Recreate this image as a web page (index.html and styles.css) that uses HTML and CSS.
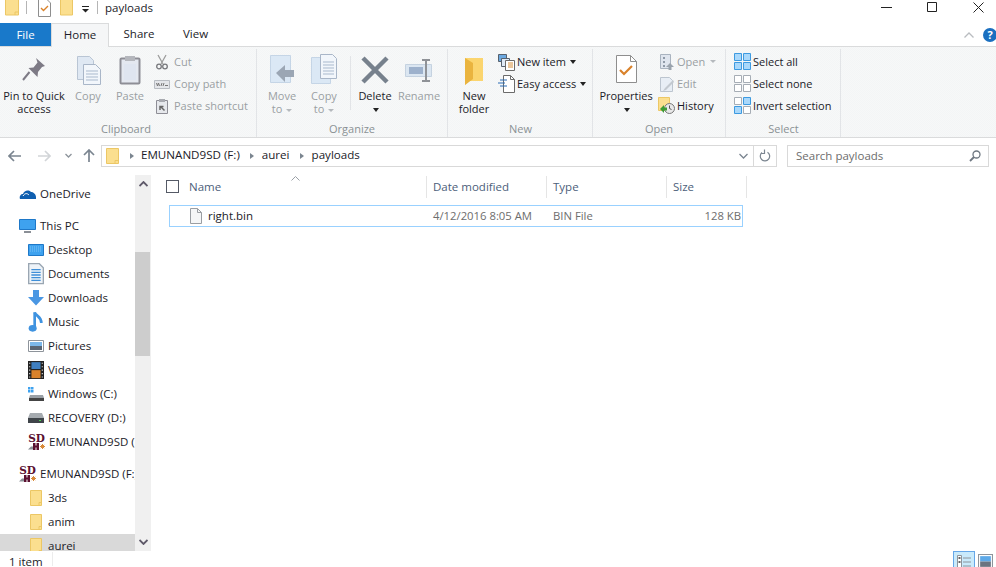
FILE: index.html
```html
<!DOCTYPE html>
<html lang="en">
<head>
<meta charset="utf-8">
<title>payloads</title>
<link rel="stylesheet" href="styles.css">
</head>
<body>
<div class="window">
  <header class="titlebar">
    <div class="qat">
      <svg class="qi folder-q" viewBox="0 0 14 16"><path d="M.5-1h13v16H.5z" fill="#fbdf8f" stroke="#ecc765"/><path d="M10 15v-3h3.500" fill="none" stroke="#ecc765"/></svg>
      <span class="qsep"></span>
      <svg class="qi doc-q" viewBox="0 0 13 17"><path d="M.5-1h8l4 4v13.500h-12z" fill="#fff" stroke="#8e8e8e"/><path d="M3 8l2.500 2.500L10 6" fill="none" stroke="#d9822b" stroke-width="1.400"/></svg>
      <svg class="qi folder-q2" viewBox="0 0 13 16"><path d="M.5-1h12v16H.5z" fill="#fbdf8f" stroke="#ecc765"/></svg>
      <svg class="qi drop-q" viewBox="0 0 7 7"><path d="M0 .5h7" stroke="#222"/><path d="M0 3h7L3.500 6.500z" fill="#222"/></svg>
      <span class="qsep qsep2"></span>
      <span class="title">payloads</span>
    </div>
    <div class="winctl">
      <svg class="wc" viewBox="0 0 11 11"><path d="M0 5.500h11" stroke="#222"/></svg>
      <svg class="wc" viewBox="0 0 11 11"><path d="M.5.500h9v9h-9z" fill="none" stroke="#222"/></svg>
      <svg class="wc" viewBox="0 0 11 11"><path d="M.5.500l10 10M10.500.500l-10 10" stroke="#222" fill="none"/></svg>
    </div>
  </header>

  <nav class="tabs">
    <span class="tab tab-file">File</span>
    <span class="tab tab-home">Home</span>
    <span class="tab tab-share">Share</span>
    <span class="tab tab-view">View</span>
    <span class="tabs-right">
      <svg class="collapse" viewBox="0 0 10 6"><path d="M.5 5.500L5 1l4.500 4.500" fill="none" stroke="#b9bcc0" stroke-width="1.300"/></svg>
      <span class="help">?</span>
    </span>
  </nav>

  <section class="ribbon">
    <div class="group g-clip">
      <div class="body">
        <div class="large w66">
          <svg class="ic32" viewBox="0 0 32 32"><path d="M18 4l9 8-3 1-4 5-.500 5-9-9 5-.500 4-5z" fill="#7d7a85"/><path d="M11.500 18L5 26" stroke="#7d7a85" stroke-width="2"/></svg>
          <span class="ltext">Pin to Quick<br>access</span>
        </div>
        <div class="large w42 off">
          <svg class="ic32" viewBox="0 0 32 32"><path d="M5.500 2.500h12l4 4v19h-16z" fill="#dfe8f3" stroke="#b9c5d4"/><path d="M11.500 10.500h12l5 5v15h-17z" fill="#f2f6fb" stroke="#a9b6c8"/><path d="M14 17h12M14 20h12M14 23h12M14 26h12" stroke="#a9b9cd"/></svg>
          <span class="ltext">Copy</span>
        </div>
        <div class="large w42 off">
          <svg class="ic32" viewBox="0 0 32 32"><rect x="6.500" y="4.500" width="19" height="25" rx="1" fill="#e4e8f0" stroke="#8e8e96" stroke-width="2"/><rect x="11" y="2" width="10" height="5" fill="#b4b6bc"/><path d="M10 10h12v16H10z" fill="#dfe5f0"/></svg>
          <span class="ltext">Paste</span>
        </div>
        <div class="small-col sc-clip">
          <div class="small off"><svg class="ic16" viewBox="0 0 16 16"><path d="M4 1l5 9M12 1l-5 9" stroke="#9d9d9d" stroke-width="1.300"/><circle cx="5" cy="12.500" r="2.300" fill="none" stroke="#77787c" stroke-width="1.300"/><circle cx="11" cy="12.500" r="2.300" fill="none" stroke="#77787c" stroke-width="1.300"/></svg>Cut</div>
          <div class="small off"><svg class="ic16" viewBox="0 0 16 16"><path d="M.5 4.500h15v8H.5z" fill="#e4e6ea" stroke="#b8bcc2"/><path d="M2.500 7l1 3 1-3 1 3M8 7l-1 3M10 7l-1 3M11 9.500h3" fill="none" stroke="#777"/></svg>Copy path</div>
          <div class="small off"><svg class="ic16" viewBox="0 0 16 16"><path d="M2.500 2.500h11v13h-11z" fill="#e6e8ec" stroke="#8e8e96"/><rect x="5" y="1" width="6" height="3" fill="#a8aab0"/><path d="M6 12V8.500h3.500M6.500 8.500l4 4" stroke="#666" fill="none" stroke-width="1.500"/></svg>Paste shortcut</div>
        </div>
      </div>
      <div class="glabel">Clipboard</div>
    </div>

    <div class="group g-org">
      <div class="body">
        <div class="large w42 off">
          <svg class="ic32" viewBox="0 0 32 32"><path d="M4.500 1.500h20v27h-20z" fill="#dbe8f5" stroke="#c5d5e6"/><path d="M10 19l9-8v5h9v7h-9v5z" fill="#9ba6b4"/></svg>
          <span class="ltext">Move<br>to <i class="caret-off"></i></span>
        </div>
        <div class="large w42 off">
          <svg class="ic32" viewBox="0 0 32 32"><path d="M3.500 3.500h19v26h-19z" fill="#dbe8f5" stroke="#c5d5e6"/><path d="M12.500 .5h12l4 4v20h-16z" fill="#f2f6fb" stroke="#a9b6c8"/><path d="M15 8h11M15 11h11M15 14h11M15 17h11M15 20h11" stroke="#a9b9cd"/></svg>
          <span class="ltext">Copy<br>to <i class="caret-off"></i></span>
        </div>
        <span class="vsep"></span>
        <div class="large w42">
          <svg class="ic32" viewBox="0 0 32 32"><path d="M4 4l24 24M28 4L4 28" stroke="#77818d" stroke-width="4.500"/></svg>
          <span class="ltext">Delete<br><i class="caret"></i></span>
        </div>
        <div class="large w42 m2 off">
          <svg class="ic32" viewBox="0 0 32 32"><path d="M2.500 10.500h26v12h-26z" fill="#dbe6f1" stroke="#c5d2e0"/><path d="M6 13h14v7H6z" fill="#9db1cc"/><path d="M19 6h8M23 6v21M19 27h8" stroke="#8f9297" stroke-width="2" fill="none"/></svg>
          <span class="ltext">Rename</span>
        </div>
      </div>
      <div class="glabel">Organize</div>
    </div>

    <div class="group g-new">
      <div class="body">
        <div class="large w50">
          <svg class="ic32" viewBox="0 0 32 32"><path d="M7 4h18v23H11l-4 4z" fill="#fbd56f"/><path d="M7 4l8 5v16l-8 6z" fill="#eab43f"/></svg>
          <span class="ltext">New<br>folder</span>
        </div>
        <div class="small-col sc-new">
          <div class="small"><svg class="ic18" viewBox="0 0 18 18"><path d="M.5 1.500h8v7h-8z" fill="#6ba8e0" stroke="#56616e"/><path d="M3.500 5.500h8v8h-8z" fill="#dfeaf6" stroke="#56616e"/><path d="M7.500 7.500h9v10h-9z" fill="#fff" stroke="#6b6b6b"/><path d="M10 10h5M10 12h5M10 14h5" stroke="#d68f3a"/></svg>New item <i class="caret"></i></div>
          <div class="small"><svg class="ic18" viewBox="0 0 18 18"><path d="M5.500 .5h7l4 4v13h-11z" fill="#fff" stroke="#6b6b6b"/><path d="M12.500.5v4h4" fill="none" stroke="#6b6b6b"/><path d="M2 5h7M0 8h7M2 11h7" stroke="#2a6cb5"/></svg>Easy access <i class="caret"></i></div>
        </div>
      </div>
      <div class="glabel">New</div>
    </div>

    <div class="group g-open">
      <div class="body">
        <div class="large w62">
          <svg class="ic32" viewBox="0 0 32 32"><path d="M6.500 1.500h14l6 6v21h-20z" fill="#fff" stroke="#8e8e8e"/><path d="M20.500 1.500v6h6" fill="none" stroke="#8e8e8e"/><path d="M10 16l4 4 8-8" fill="none" stroke="#d9822b" stroke-width="2.200"/></svg>
          <span class="ltext">Properties<br><i class="caret"></i></span>
        </div>
        <div class="small-col sc-open">
          <div class="small off"><svg class="ic16" viewBox="0 0 16 16"><path d="M1.500 .5h10v14h-10z" fill="#dfe5ee" stroke="#a9b3bf"/><path d="M4 3h2v2H4zM4 7h2v2H4zM4 11h2v2H4z" fill="#8f9aa8"/><path d="M11 9l4 4h-2.500v3h-3v-3H7z" fill="#9aa3ad"/></svg>Open <i class="caret-off"></i></div>
          <div class="small off"><svg class="ic16" viewBox="0 0 16 16"><path d="M1.500 1.500h9l3 3v11h-12z" fill="#e8eef5" stroke="#bcc5cf"/><path d="M14 4L6 12l-2 3 3-1 8-8z" fill="#c3c9d0"/></svg>Edit</div>
          <div class="small"><svg class="ic-h" viewBox="0 0 17 17"><path d="M.5.500h11v13H.5z" fill="#fbdf8f" stroke="#ecc765"/><circle cx="11.500" cy="11.500" r="5" fill="#e8e8e8" stroke="#777"/><path d="M11.500 8.500v3l2 1" stroke="#555" fill="none"/><path d="M2 12l4-4v2.500h3v3H6V16z" fill="#3d9c35"/></svg>History</div>
        </div>
      </div>
      <div class="glabel">Open</div>
    </div>

    <div class="group g-sel">
      <div class="body">
        <div class="small-col sc-sel">
          <div class="small"><svg class="ic17" viewBox="0 0 17 17"><path d="M.5.500h7v7h-7zM9.500.500h7v7h-7zM.5 9.500h7v7h-7zM9.500 9.500h7v7h-7z" fill="#a9d8fb" stroke="#3d9ae0"/></svg>Select all</div>
          <div class="small"><svg class="ic17" viewBox="0 0 17 17"><path d="M.5.500h7v7h-7zM9.500.500h7v7h-7zM.5 9.500h7v7h-7zM9.500 9.500h7v7h-7z" fill="#fff" stroke="#a6adb5"/></svg>Select none</div>
          <div class="small"><svg class="ic17" viewBox="0 0 17 17"><path d="M.5.500h7v7h-7zM9.500 9.500h7v7h-7z" fill="#fff" stroke="#a6adb5"/><path d="M9.500.500h7v7h-7zM.5 9.500h7v7h-7z" fill="#a9d8fb" stroke="#3d9ae0"/></svg>Invert selection</div>
        </div>
      </div>
      <div class="glabel">Select</div>
    </div>
  </section>

  <div class="addrrow">
    <div class="navbtns">
      <svg class="nb" viewBox="0 0 13 12"><path d="M6 1L1 6l5 5M1 6h12" fill="none" stroke="#7b8590" stroke-width="1.700"/></svg>
      <svg class="nb nb-fwd" viewBox="0 0 13 12"><path d="M7 1l5 5-5 5M12 6H0" fill="none" stroke="#d2d5d8" stroke-width="1.700"/></svg>
      <svg class="nb-down" viewBox="0 0 7 5"><path d="M.5 1l3 3 3-3" fill="none" stroke="#8d949b" stroke-width="1.300"/></svg>
      <svg class="nb nb-up" viewBox="0 0 12 13"><path d="M1 6l5-5 5 5M6 1v12" fill="none" stroke="#7b8590" stroke-width="1.700"/></svg>
    </div>
    <div class="addr">
      <svg class="addr-folder" viewBox="0 0 13 16"><path d="M.5.500h12v15H.5z" fill="#fbdf8f" stroke="#ecc765"/><path d="M9 15.500v-3h3.500" fill="none" stroke="#ecc765"/></svg>
      <span class="crumb-arrow first"></span><span class="crumb">EMUNAND9SD (F:)</span>
      <span class="crumb-arrow"></span><span class="crumb">aurei</span>
      <span class="crumb-arrow"></span><span class="crumb">payloads</span>
      <svg class="addr-down" viewBox="0 0 9 6"><path d="M.5 1l4 4 4-4" fill="none" stroke="#7b8590" stroke-width="1.300"/></svg>
      <span class="addr-sep"></span>
      <svg class="addr-ref" viewBox="0 0 12 13"><path d="M3 3.500a4.700 4.700 0 1 0 5.500-.3M5.500 .5v4H2" fill="none" stroke="#7b8590" stroke-width="1.200"/></svg>
    </div>
    <div class="search">
      <span>Search payloads</span>
      <svg class="mag" viewBox="0 0 12 12"><circle cx="7.500" cy="4.500" r="3.500" fill="none" stroke="#6e7781" stroke-width="1.300"/><path d="M5 7l-4 4" stroke="#6e7781" stroke-width="1.800"/></svg>
    </div>
  </div>

  <main class="main">
    <aside class="nav">
      <div class="nrow l1"><svg class="ni17" viewBox="0 0 17 12"><path d="M1 11c-1-3 1-5 3-5 1-3 5-5 8-2 2 0 5 2 5 5v2z" fill="#0f5fb0"/><path d="M4 8c2-3 4-3 6-1" stroke="#fff" fill="none"/></svg>OneDrive</div>
      <div class="nrow l1 gap"><svg class="ni17" viewBox="0 0 17 14"><path d="M.5.500h16v10H.5z" fill="#3ea2ef" stroke="#1e78c8"/><path d="M5 13h7" stroke="#8a8f96" stroke-width="2"/></svg>This PC</div>
      <div class="nrow l2"><svg class="ni16" viewBox="0 0 16 12"><path d="M.5.500h15v11H.5z" fill="#3ea2ef" stroke="#1e78c8"/><path d="M2 3h12M2 5h12M2 7h12" stroke="#7cc3f5" stroke-dasharray="1 1"/></svg>Desktop</div>
      <div class="nrow l2"><svg class="ni16" viewBox="0 0 12 16"><path d="M.5.500h8l3 3v12H.5z" fill="#eef3f8" stroke="#9aa6b2"/><path d="M2.500 5h7M2.500 7h7M2.500 9h7M2.500 11h7M2.500 13h7" stroke="#3f8fd8"/></svg>Documents</div>
      <div class="nrow l2"><svg class="ni16" viewBox="0 0 16 16"><path d="M5 0h6v7h5l-8 8.500L0 7h5z" fill="#4a97e3"/></svg>Downloads</div>
      <div class="nrow l2"><svg class="ni16" viewBox="0 0 12 16"><path d="M5 1v11" stroke="#3f93e0" stroke-width="2"/><ellipse cx="3.500" cy="13" rx="3" ry="2.500" fill="#3f93e0"/><path d="M5 1c1 3 5 3 5 8" stroke="#3f93e0" stroke-width="2" fill="none"/></svg>Music</div>
      <div class="nrow l2"><svg class="ni16" viewBox="0 0 16 12"><path d="M.5.500h15v11H.5z" fill="#fff" stroke="#8e949b"/><path d="M2 2h12v4H2z" fill="#7cb8ea"/><path d="M2 6h12v4H2z" fill="#5a6674"/></svg>Pictures</div>
      <div class="nrow l2"><svg class="ni16" viewBox="0 0 14 16"><path d="M0 0h14v16H0z" fill="#222"/><path d="M3 1h8v6H3z" fill="#3f7fc0"/><path d="M3 8h8v7H3z" fill="#d9822b"/><path d="M1 2h1M1 5h1M1 8h1M1 11h1M1 14h1M12 2h1M12 5h1M12 8h1M12 11h1M12 14h1" stroke="#ddd"/></svg>Videos</div>
      <div class="nrow l2"><svg class="ni16" viewBox="0 0 16 14"><path d="M0 0h2.500v2.500H0zM3 0h2.500v2.500H3zM0 3h2.500v2.500H0zM3 3h2.500v2.500H3z" fill="#3ea2ef"/><path d="M2 8h13l1 3v3H1v-3z" fill="#9aa0a6"/><path d="M1 11h15v3H1z" fill="#444"/></svg>Windows (C:)</div>
      <div class="nrow l2"><svg class="ni16" viewBox="0 0 16 10"><path d="M2 0h12l2 5v5H0V5z" fill="#a6abb0"/><path d="M0 5h16v5H0z" fill="#3f4449"/><path d="M11 7h2v1h-2z" fill="#4fd04f"/></svg>RECOVERY (D:)</div>
      <div class="nrow l2"><span class="sd"><b>SD</b><svg class="sdb" viewBox="0 0 17 7"><path d="M0 6.500l3-3h3v3z" fill="#8a8f96"/><path d="M5 0h2.500v2.500h1V0H11v7H8.500V4.500h-1V7H5z" fill="#5a1030"/><path d="M14.500 1v5M12 3.500h5M12.800 1.800l3.400 3.400M16.200 1.800l-3.400 3.400" stroke="#d98a3a"/></svg></span>EMUNAND9SD (F:)</div>
      <div class="nrow l1 gap"><span class="sd"><b>SD</b><svg class="sdb" viewBox="0 0 17 7"><path d="M0 6.500l3-3h3v3z" fill="#8a8f96"/><path d="M5 0h2.500v2.500h1V0H11v7H8.500V4.500h-1V7H5z" fill="#5a1030"/><path d="M14.500 1v5M12 3.500h5M12.800 1.800l3.400 3.400M16.200 1.800l-3.400 3.400" stroke="#d98a3a"/></svg></span>EMUNAND9SD (F:)</div>
      <div class="nrow l2"><svg class="ni-f" viewBox="0 0 12 16"><path d="M.5.500h11v15H.5z" fill="#fbdf8f" stroke="#ecc765"/><path d="M9 15.500v-3h2.500" fill="none" stroke="#ecc765"/></svg>3ds</div>
      <div class="nrow l2"><svg class="ni-f" viewBox="0 0 12 16"><path d="M.5.500h11v15H.5z" fill="#fbdf8f" stroke="#ecc765"/><path d="M9 15.500v-3h2.500" fill="none" stroke="#ecc765"/></svg>anim</div>
      <div class="nrow l2 sel"><svg class="ni-f" viewBox="0 0 12 16"><path d="M.5.500h11v15H.5z" fill="#fbdf8f" stroke="#ecc765"/><path d="M9 15.500v-3h2.500" fill="none" stroke="#ecc765"/></svg>aurei</div>
    </aside>
    <div class="scroll">
      <svg class="sarrow" viewBox="0 0 9 6"><path d="M.5 5L4.500 1l4 4" fill="none" stroke="#5f5a6a" stroke-width="1.800"/></svg>
      <div class="track"><div class="thumb"></div></div>
      <svg class="sarrow" viewBox="0 0 9 6"><path d="M.5 1l4 4 4-4" fill="none" stroke="#5f5a6a" stroke-width="1.800"/></svg>
    </div>
    <div class="content">
      <div class="lhead">
        <span class="check"></span>
        <span class="hcell hname">Name</span>
        <span class="hcell hdate">Date modified</span>
        <span class="hcell htype">Type</span>
        <span class="hcell hsize">Size</span>
        <svg class="sort" viewBox="0 0 9 5"><path d="M.5 4.500l4-4 4 4" fill="none" stroke="#9aa0a6"/></svg>
      </div>
      <div class="frow">
        <svg class="fileic" viewBox="0 0 12 16"><path d="M.5.500h7l4 4v11H.5z" fill="#f5f6f7" stroke="#9a9ea3"/><path d="M7.500.500v4h4" fill="none" stroke="#9a9ea3"/></svg>
        <span class="fname">right.bin</span>
        <span class="fdate">4/12/2016 8:05 AM</span>
        <span class="ftype">BIN File</span>
        <span class="fsize">128 KB</span>
      </div>
    </div>
  </main>

  <footer class="status">
    <span class="count">1 item</span>
    <span class="status-sep"></span>
    <span class="views">
      <span class="vbtn on"><svg viewBox="0 0 16 14"><path d="M1.500 .5h4v13h-4z" fill="#fff" stroke="#8e949b"/><path d="M7 3h8M7 7h8M7 11h8" stroke="#8e949b"/><path d="M2.500 2h2v2h-2zM2.500 6h2v2h-2z" fill="#666"/></svg></span>
      <span class="vbtn"><svg viewBox="0 0 14 14"><path d="M.5 .5h13v13H.5z" fill="#fff" stroke="#8e949b"/><path d="M2 2h10v5H2z" fill="#5da9e8"/><path d="M2 7h10v5H2z" fill="#6b7480"/></svg></span>
    </span>
  </footer>
</div>
</body>
</html>
```

FILE: styles.css
```css
* { box-sizing: border-box; }
html, body { margin: 0; padding: 0; }
body { width: 996px; height: 567px; overflow: hidden; background: #fff; font-family: "Open Sans", "Noto Sans", sans-serif; font-size: 11.5px; color: #1b1b28; }
svg { display: block; flex: none; }
i { font-style: normal; }
.window { display: flex; flex-direction: column; height: 567px; }

/* title bar */
.titlebar { height: 23px; display: flex; justify-content: space-between; overflow: hidden; }
.qat { display: flex; align-items: flex-start; }
.qi { height: 16px; }
.folder-q { width: 14px; margin-left: 5px; }
.qsep { width: 1px; height: 13px; margin: 1px 0 0 7px; background: #b5b5b5; }
.doc-q { width: 13px; height: 17px; margin-left: 11px; }
.folder-q2 { width: 13px; margin-left: 9px; }
.drop-q { width: 7px; height: 7px; margin: 6px 0 0 9px; }
.qsep2 { margin-left: 8px; }
.title { margin-left: 7px; font-size: 11.5px; line-height: 16px; }
.winctl { display: flex; padding-right: 12px; }
.wc { width: 11px; height: 11px; margin: 2px 0 0 35px; }

/* tabs */
.tabs { height: 24px; display: flex; position: relative; z-index: 1; align-items: stretch; }
.tab { display: flex; align-items: center; justify-content: center; height: 24px; padding-bottom: 2px; }
.tab-file { width: 51px; height: 23px; padding-bottom: 0; background: #1979ca; color: #fff; }
.tab-home { width: 58px; background: #f5f6f7; border: 1px solid #dadbdc; border-bottom: 0; }
.tab-share { width: 60px; }
.tab-view { width: 53px; }
.tabs-right { margin-left: auto; display: flex; align-items: center; gap: 9px; margin-right: -1px; }
.collapse { width: 10px; height: 6px; }
.help { width: 14px; height: 14px; border-radius: 50%; background: #1a6fc0; color: #fff; font-size: 11px; font-weight: 700; display: flex; align-items: center; justify-content: center; }

/* ribbon */
.ribbon { height: 92px; margin-top: -1px; font-size: 11px; background-color: #f5f6f7; background-image: repeating-conic-gradient(#f3f5f6 0 25%, #f7f8f8 0 50%); background-size: 2px 2px; border-top: 1px solid #dadbdc; border-bottom: 1px solid #dadbdc; display: flex; }
.group { display: flex; flex-direction: column; height: 88px; margin-top: 2px; padding-top: 2px; border-right: 1px solid #e2e4e7; }
.g-clip { width: 257px; padding-left: 1px; }
.g-org { width: 191px; padding-left: 4px; }
.g-new { width: 145px; padding-left: 1px; }
.g-open { width: 133px; padding-left: 2px; }
.g-sel { width: 115px; padding-left: 7px; }
.g-clip .glabel { padding-right: 5px; }
.g-org .glabel { padding-right: 4px; }
.g-open .glabel { padding-right: 2px; }
.g-sel .glabel { padding-right: 6px; }
.body { flex: 1; display: flex; }
.glabel { height: 16px; text-align: center; line-height: 15px; color: #8a9194; }
.large { display: flex; flex-direction: column; align-items: center; padding-top: 3px; }
.w66 { width: 66px; }
.w42 { width: 42px; }
.w50 { width: 50px; }
.w62 { width: 62px; }
.m2 { margin-left: 2px; }
.ic32 { width: 32px; height: 32px; }
.ltext { margin-top: 3px; line-height: 13px; text-align: center; white-space: nowrap; }
.off { color: #9a9fa3; }
.vsep { width: 1px; height: 54px; margin: 5px 3px 0 5px; background: #e2e4e7; }
.small-col { display: flex; flex-direction: column; }
.sc-clip { margin-left: 3px; }
.sc-new { margin-left: -1px; }
.sc-open { margin-left: 2px; }
.sc-sel { margin-left: 1px; }
.small { height: 22px; display: flex; align-items: center; white-space: nowrap; gap: 4px; }
.sc-new .small { gap: 1px; }
.sc-open .small, .sc-sel .small { gap: 2px; }
.sc-new .caret, .sc-open .caret-off { margin-left: 3px; }
.ic16 { width: 16px; height: 16px; }
.ic17 { width: 17px; height: 17px; }
.ic18 { width: 18px; height: 18px; }
.ic-h { width: 17px; height: 17px; margin-left: -1px; }
.caret { display: inline-block; width: 0; height: 0; border: 3px solid transparent; border-top: 4px solid #222; border-bottom: 0; vertical-align: middle; margin-left: 1px; }
.caret-off { display: inline-block; width: 0; height: 0; border: 3px solid transparent; border-top: 3px solid #b5b9bd; border-bottom: 0; vertical-align: middle; margin-left: 1px; }

/* address */
.addrrow { height: 35px; display: flex; align-items: center; padding-top: 1px; }
.navbtns { width: 101px; display: flex; align-items: center; padding-left: 8px; }
.nb { width: 13px; height: 12px; }
.nb-fwd { margin-left: 17px; }
.nb-down { width: 7px; height: 5px; margin-left: 14px; }
.nb-up { width: 12px; height: 13px; margin-left: 11px; }
.addr { width: 676px; height: 22px; border: 1px solid #d9d9d9; display: flex; align-items: center; padding-left: 4px; font-size: 11.6px; }
.crumb { padding-bottom: 2px; }
.addr-folder { width: 13px; height: 16px; }
.crumb-arrow { width: 0; height: 0; border: 3px solid transparent; border-left: 4px solid #7b8590; border-right: 0; margin: 0 8px 0 10px; }
.crumb-arrow.first { margin: 0 7px 0 11px; }
.addr-down { width: 9px; height: 6px; margin-left: auto; }
.addr-sep { width: 1px; height: 20px; background: #d9d9d9; margin: 0 5px 0 5px; }
.addr-ref { width: 12px; height: 13px; margin-right: 5px; }
.search { width: 202px; height: 22px; margin-left: 10px; border: 1px solid #d9d9d9; display: flex; align-items: center; justify-content: space-between; padding: 0 7px 0 8px; color: #6d6d6d; }
.mag { width: 12px; height: 12px; }

/* main */
.main { height: 379px; display: flex; overflow: hidden; }
.nav { width: 135px; padding-top: 9px; overflow: hidden; flex: none; }
.nrow { height: 24px; display: flex; align-items: center; white-space: nowrap; flex: none; }
.l1 { padding-left: 19px; }
.l2 { padding-left: 28px; }
.gap { margin-top: 8px; }
.ni17 { width: 17px; margin-right: 4px; }
.ni16 { width: 16px; margin-right: 4px; }
.ni-f { width: 12px; height: 16px; margin: 0 6px 0 2px; }
.sel { background: #d9d9d9; }
.sd { width: 17px; margin-right: 4px; display: flex; flex-direction: column; align-items: center; flex: none; }
.sd b { font-family: "DejaVu Serif", serif; font-size: 10.5px; line-height: 9px; color: #5a1030; }
.sdb { width: 17px; height: 7px; }
.scroll { width: 16px; background: #f0f0f0; margin-top: 2px; display: flex; flex-direction: column; align-items: center; flex: none; }
.sarrow { width: 9px; height: 6px; margin: 6px 0; }
.track { flex: 1; width: 100%; padding-top: 59px; }
.thumb { width: 15px; height: 104px; background: #cdcdcd; margin-right: 1px; }
.content { flex: 1; padding-top: 3px; }
.lhead { height: 22px; display: flex; align-items: center; position: relative; color: #4c607a; padding-left: 15px; }
.check { width: 13px; height: 13px; border: 1px solid #555a66; flex: none; margin-right: 10px; }
.hcell { height: 22px; line-height: 22px; border-right: 1px solid #e5e5e5; }
.hname { width: 238px; }
.hdate { width: 120px; padding-left: 6px; }
.htype { width: 120px; padding-left: 6px; }
.hsize { width: 80px; padding-left: 6px; }
.sort { position: absolute; left: 140px; top: 0; width: 9px; height: 5px; }
.frow { width: 574px; height: 22px; margin: 7px 0 0 18px; border: 1px solid #99d1ff; display: flex; align-items: center; color: #6d6d6d; font-size: 11.3px; }
.fileic { width: 12px; height: 16px; margin-left: 20px; }
.fname { width: 225px; margin-left: 6px; color: #1b1b28; font-size: 11.5px; }
.fdate { width: 120px; }
.ftype { width: 100px; }
.fsize { width: 88px; text-align: right; }

/* status */
.status { height: 16px; display: flex; align-items: flex-start; overflow: hidden; padding-left: 9px; }
.count { width: 43px; line-height: 22px; }
.status-sep { width: 1px; height: 14px; margin-top: 1px; background: #ececec; }
.views { margin-left: auto; display: flex; gap: 3px; padding-right: 3px; align-self: flex-start; }
.vbtn { width: 15px; height: 22px; padding-top: 3px; }
.vbtn.on { width: 22px; background: #c9eafb; border: 1px solid #66a7e8; padding: 3px 2px 0; }
```
